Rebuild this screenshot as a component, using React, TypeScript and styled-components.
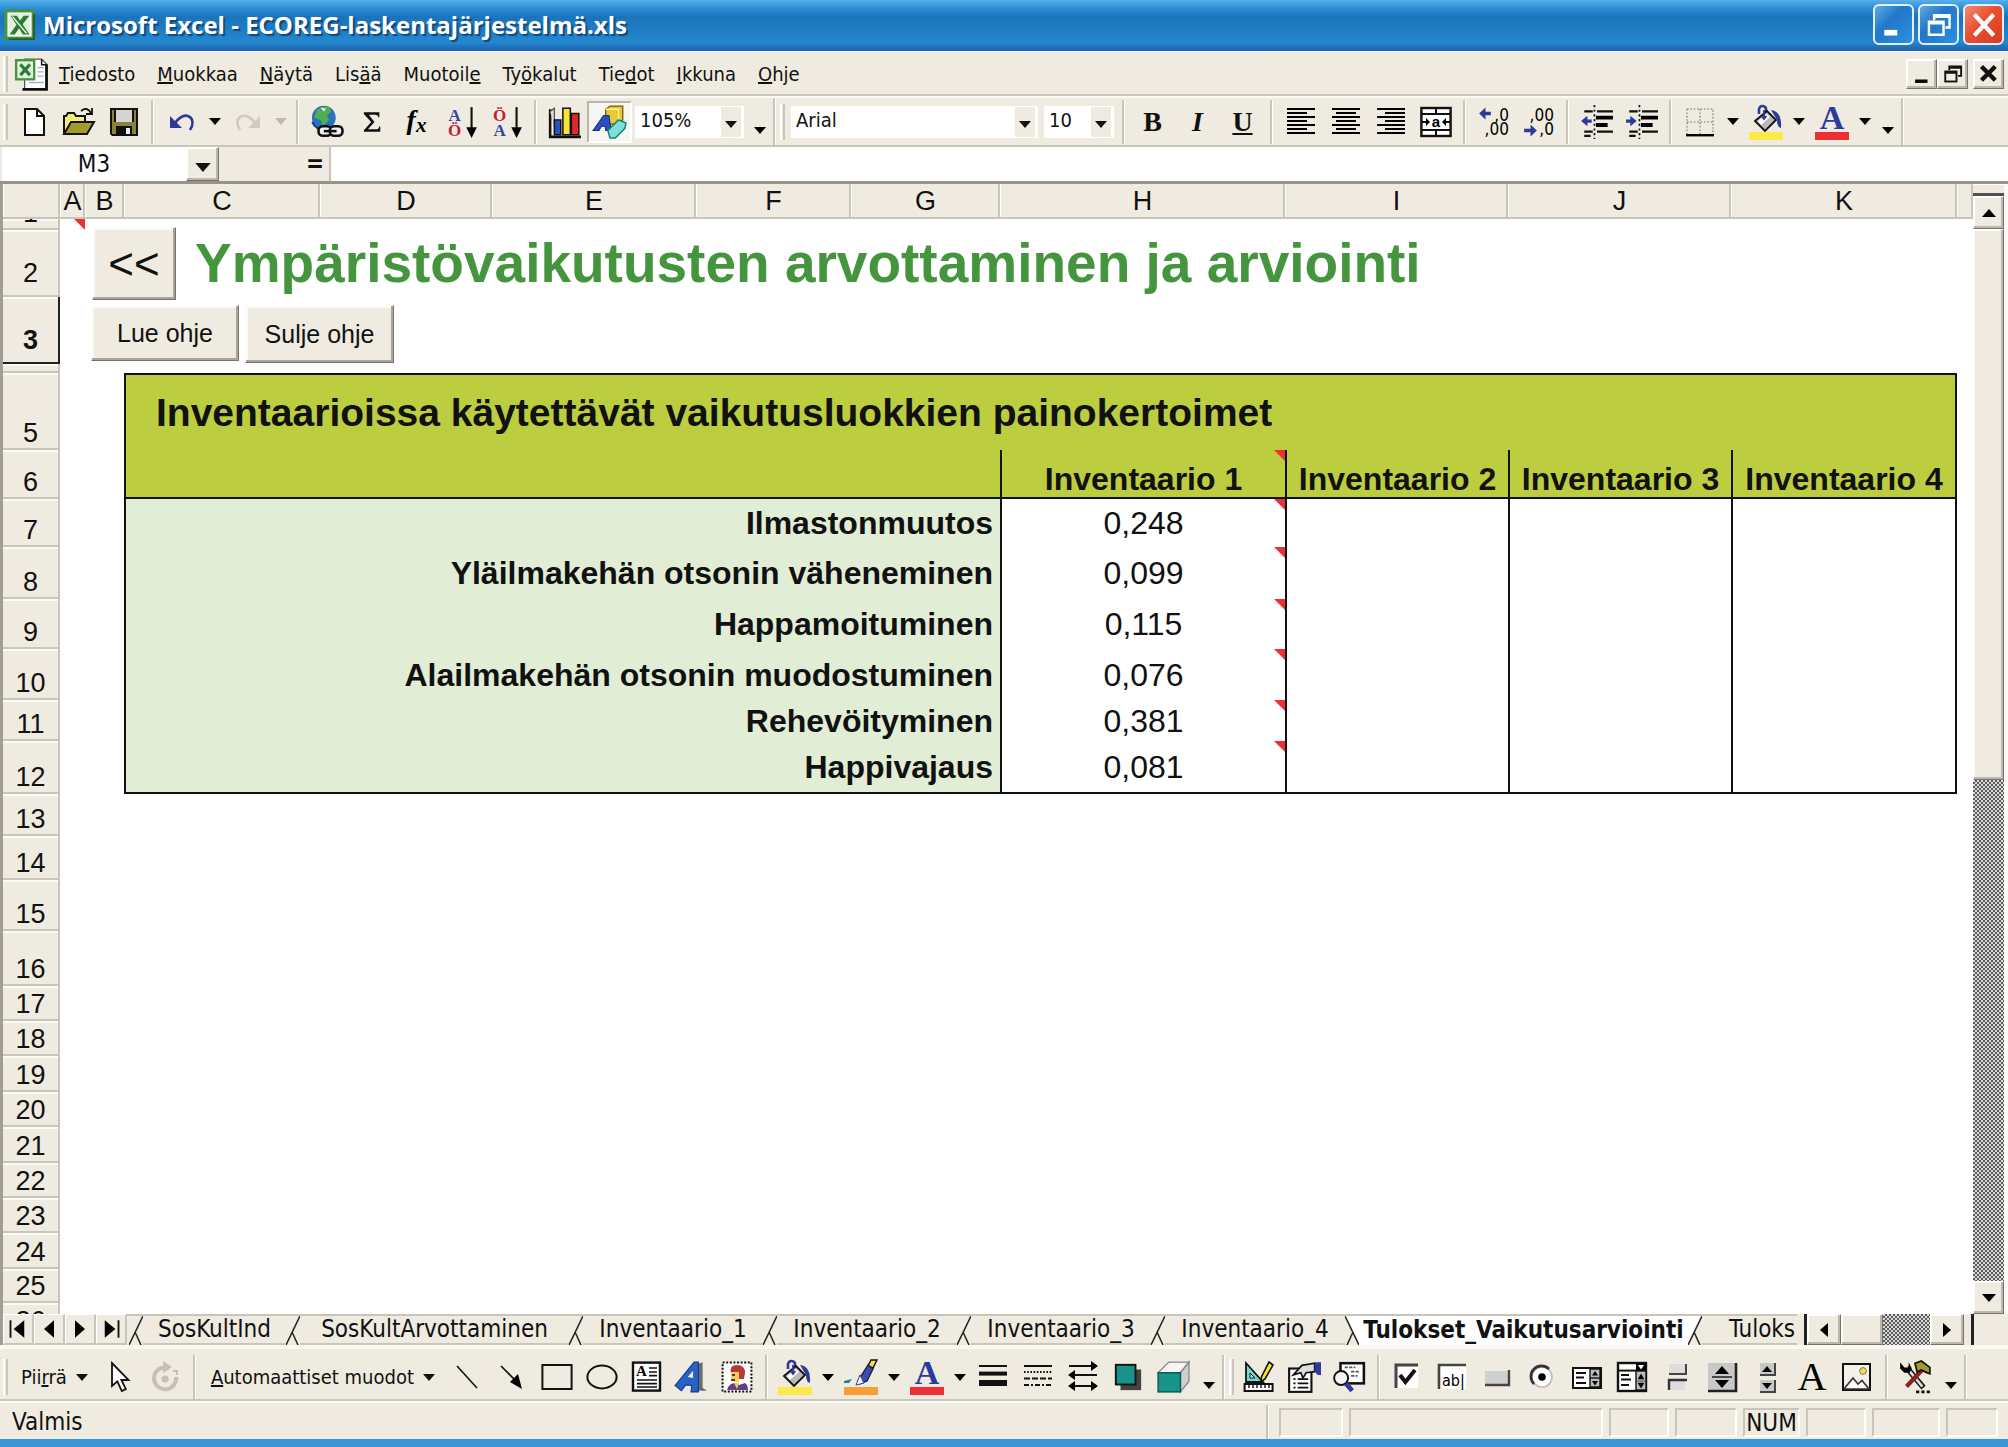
import React from "react";
import styled, { createGlobalStyle, css } from "styled-components";

const face = "#efebe0";
const shade = "#c9c5ba";
const lime = "#bccd3f";
const mint = "#e1edd5";
const ink = "#111111";
const ui = '"DejaVu Sans Condensed", "DejaVu Sans", sans-serif';
const arial = '"Liberation Sans", Arial, sans-serif';
const serif = '"Liberation Serif", "Times New Roman", serif';

const Global = createGlobalStyle`
  * { box-sizing: border-box; }
  body { margin: 0; background: ${face}; color: ${ink}; font-family: ${ui}; }
  button, input, select { font: inherit; color: inherit; margin: 0; }
  button { border: 0; padding: 0; background: transparent; cursor: default; }
`;

const Window = styled.div`
  display: flex;
  flex-direction: column;
  height: 100vh;
  overflow: hidden;
  background: ${face};
`;

/* ---------- title bar ---------- */

const TitleBar = styled.header`
  display: flex;
  align-items: center;
  gap: 8px;
  flex: none;
  height: 51px;
  padding: 0 4px 2px 5px;
  background: linear-gradient(#56b0ea 0, #2f90d6 8px, #1b74ba 17px, #1f7dc4 30px, #2589d0 42px, #1c63b0 50px);
`;

const WindowTitle = styled.h1`
  flex: 1;
  margin: 0;
  font: bold 24px/32px "Open Sans", sans-serif;
  color: #fff;
  text-shadow: 2px 2px 1px #12467f;
  white-space: nowrap;
`;

const CaptionButtons = styled.div`
  display: flex;
  gap: 4px;
`;

const CaptionButton = styled.button<{ $close?: boolean }>`
  width: 41px;
  height: 41px;
  border: 2px solid #e3effa;
  border-radius: 6px;
  background: ${(p) =>
    p.$close
      ? "linear-gradient(135deg, #f08c70, #e8502f 45%, #d83c1c)"
      : "linear-gradient(135deg, #5fa9e4, #2277c8 40%, #2d8fe0)"};
  svg { display: block; margin: auto; }
`;

/* ---------- menus and toolbars ---------- */

const MenuBar = styled.nav`
  display: flex;
  align-items: center;
  flex: none;
  height: 45px;
  padding: 2px 4px 0 3px;
  border-top: 1px solid #fff;
  border-bottom: 2px solid ${shade};
`;

const MenuIcon = styled.span`
  display: flex;
  margin-left: 3px;
`;

const MenuItem = styled.button`
  padding: 0 11px;
  font-size: 20px;
  line-height: 32px;
  white-space: nowrap;
`;

const Spring = styled.span`
  flex: 1;
`;

const raised = css`
  border: 1px solid #fff;
  border-color: #fff #77736b #77736b #fff;
  box-shadow: inset -2px -2px 0 #bbb7ac, inset 1px 1px 0 #fff;
  background: ${face};
`;

const ChildButton = styled.button<{ $apart?: boolean }>`
  ${raised}
  display: flex;
  align-items: center;
  justify-content: center;
  width: 31px;
  height: 30px;
  margin-left: ${(p) => (p.$apart ? 5 : 0)}px;
`;

const Toolbar = styled.div`
  display: flex;
  align-items: center;
  flex: none;
  height: 51px;
  padding-left: 3px;
  border-top: 2px solid #fbfaf5;
  border-bottom: 2px solid ${shade};
`;

const DrawBar = styled(Toolbar)`
  height: 56px;
  padding-top: 6px;
  border-top: 4px solid #faf8f2;
`;

const Grip = styled.span`
  flex: none;
  width: 5px;
  height: 36px;
  margin-right: 3px;
  border-left: 2px solid #fff;
  border-right: 2px solid ${shade};
`;

const Rule = styled.span`
  flex: none;
  width: 3px;
  height: 44px;
  margin: 0 5px;
  border-left: 2px solid ${shade};
  border-right: 1px solid #fff;
`;

const BarEnd = styled.span`
  flex: none;
  align-self: stretch;
  width: 3px;
  margin-right: 4px;
  border-left: 2px solid ${shade};
  border-right: 1px solid #fff;
`;

const Tool = styled.button<{ $down?: boolean }>`
  display: flex;
  align-items: center;
  justify-content: center;
  flex: none;
  width: 45px;
  height: 42px;
  ${(p) =>
    p.$down &&
    css`
      border: 2px solid #fff;
      border-color: #bab6ab #fff #fff #bab6ab;
      background: #f8f6f2;
    `}
`;

const Letter = styled(Tool)<{ $italic?: boolean; $under?: boolean }>`
  font: ${(p) => (p.$italic ? "italic" : "normal")} bold 28px/32px ${serif};
  text-decoration: ${(p) => (p.$under ? "underline" : "none")};
`;

const Drop = styled.button<{ $dim?: boolean }>`
  display: flex;
  align-items: center;
  justify-content: center;
  flex: none;
  width: 21px;
  height: 42px;
  color: ${(p) => (p.$dim ? "#bdb9ae" : "#000")};
`;

const More = styled(Drop)`
  width: 26px;
  align-items: flex-end;
  padding-bottom: 9px;
`;

const TextTool = styled.button`
  display: flex;
  align-items: center;
  gap: 9px;
  padding: 0 10px;
  height: 42px;
  font-size: 20px;
  white-space: nowrap;
`;

const PickerBox = styled.span<{ $width: number }>`
  position: relative;
  flex: none;
  width: ${(p) => p.$width}px;
  height: 32px;
  margin: 0 3px;
  border: 1px solid #fff;
  background: linear-gradient(to left, #fff 2px, ${face} 2px, ${face} 22px, #fff 22px);
  select {
    appearance: none;
    width: 100%;
    height: 30px;
    padding: 0 0 4px 4px;
    border: 0;
    background: transparent;
    font-size: 20px;
  }
  svg { position: absolute; right: 6px; top: 14px; pointer-events: none; }
`;

/* ---------- formula bar ---------- */

const FormulaBar = styled.div`
  display: flex;
  flex: none;
  height: 37px;
  padding-left: 2px;
  border-bottom: 3px solid #97938a;
  font-size: 24px;
`;

const NameBox = styled.input`
  width: 184px;
  border: 0;
  padding: 0;
  background: #fff;
  text-align: center;
  border-radius: 0;
`;

const NameDrop = styled.button`
  ${raised}
  width: 33px;
`;

const EqualsButton = styled.button`
  width: 112px;
  padding-right: 5px;
  border-right: 2px solid ${shade};
  text-align: right;
  font-weight: bold;
`;

const FormulaInput = styled.input`
  flex: 1;
  min-width: 0;
  border: 0;
  padding: 0 6px;
  background: #fff;
  border-radius: 0;
`;

/* ---------- sheet ---------- */

const Body = styled.div`
  display: flex;
  flex: 1 1 0;
  min-height: 0;
  border-left: 3px solid #a19d94;
  background: #fff;
`;

const Canvas = styled.main`
  position: relative;
  flex: 1;
  min-width: 0;
  overflow: hidden;
`;

const Grid = styled.table`
  width: 100%;
  table-layout: fixed;
  border-collapse: separate;
  border-spacing: 0;
  font-family: ${arial};
  th, td { padding: 0; }
`;

const ColHead = styled.th`
  height: 35px;
  padding: 1px 0 0 2px !important;
  border-right: 2px solid ${shade};
  border-bottom: 2px solid ${shade};
  background: ${face};
  box-shadow: inset 1px 0 0 #fff;
  font-size: 27px;
  line-height: 28px;
  font-weight: normal;
  vertical-align: middle;
`;

const RowHead = styled.th<{ $h: number; $high?: boolean; $active?: boolean }>`
  height: ${(p) => p.$h}px;
  border-right: 2px solid ${shade};
  border-bottom: 2px solid ${shade};
  background: ${face};
  box-shadow: inset 0 2px 0 #fbfaf5;
  font-size: 27px;
  line-height: 28px;
  font-weight: normal;
  vertical-align: bottom;
  ${(p) => p.$active && css`border-color: #222; font-weight: bold;`}
  span {
    display: flex;
    align-items: flex-end;
    justify-content: center;
    height: ${(p) => Math.min(p.$h - 2, 40)}px;
    padding-bottom: ${(p) => (p.$high ? 8 : 1)}px;
    overflow: hidden;
  }
`;

const Cell = styled.td`
  position: relative;
`;

const Heading = styled.td`
  padding: 0 0 6px 71px !important;
  vertical-align: bottom;
  font-size: 55px;
  line-height: 55px;
  font-weight: bold;
  color: #45953f;
  white-space: nowrap;
`;

const Banner = styled.td`
  padding-left: 30px !important;
  border: 2px solid ${ink};
  border-bottom: 0;
  background: ${lime};
  font-size: 39px;
  line-height: 44px;
  font-weight: bold;
  white-space: nowrap;
`;

const Inventory = styled.td<{ $last?: boolean }>`
  position: relative;
  padding-bottom: 2px !important;
  border-left: 2px solid ${ink};
  border-bottom: 2px solid ${ink};
  border-right: ${(p) => (p.$last ? `2px solid ${ink}` : 0)};
  background: ${lime};
  font-size: 32px;
  line-height: 32px;
  font-weight: bold;
  text-align: center;
  vertical-align: bottom;
  white-space: nowrap;
`;

const Label = styled.td<{ $end?: boolean }>`
  padding-right: 7px !important;
  border-left: 2px solid ${ink};
  border-bottom: ${(p) => (p.$end ? `2px solid ${ink}` : 0)};
  background: ${mint};
  font-size: 32px;
  line-height: 36px;
  font-weight: bold;
  text-align: right;
  white-space: nowrap;
`;

const Value = styled.td<{ $end?: boolean; $last?: boolean }>`
  position: relative;
  border-left: 2px solid ${ink};
  border-bottom: ${(p) => (p.$end ? `2px solid ${ink}` : 0)};
  border-right: ${(p) => (p.$last ? `2px solid ${ink}` : 0)};
  font-size: 32px;
  line-height: 36px;
  text-align: center;
`;

const Note = styled.i`
  position: absolute;
  top: 0;
  right: 0;
  width: 11px;
  height: 11px;
  background: #ee3035;
  clip-path: polygon(0 0, 100% 0, 100% 100%);
`;

/* Form controls float over the cells, as drawn objects do in a worksheet. */
const FloatButton = styled.button<{ $x: number; $y: number; $w: number; $h: number; $big?: boolean }>`
  ${raised}
  position: absolute;
  left: ${(p) => p.$x}px;
  top: ${(p) => p.$y}px;
  width: ${(p) => p.$w}px;
  height: ${(p) => p.$h}px;
  box-shadow: inset -2px -2px 0 #a9a59b, inset 2px 2px 0 #fbfaf6;
  font-family: ${arial};
  font-size: ${(p) => (p.$big ? 44 : 25)}px;
  line-height: 44px;
`;

const ScrollColumn = styled.aside`
  display: flex;
  flex-direction: column;
  flex: none;
  width: 35px;
  border-right: 4px solid #fbfaf6;
`;

const SplitGrip = styled.span`
  height: 12px;
  background: ${face};
  border-top: 1px solid #fff;
  border-bottom: 3px solid #55524c;
`;

const ScrollButton = styled.button`
  ${raised}
  display: flex;
  align-items: center;
  justify-content: center;
  height: 33px;
  width: 100%;
`;

const Thumb = styled.span`
  ${raised}
  flex: 550 1 0;
`;

const dither = css`
  background: repeating-conic-gradient(#5c5c5c 0 25%, #d9d9d9 0 50%) 0 0 / 4px 4px;
`;

const Trough = styled.span`
  ${dither}
  flex: 502 1 0;
`;

/* ---------- sheet tabs ---------- */

const TabBar = styled.div`
  display: flex;
  flex: none;
  height: 31px;
  border-left: 3px solid #a19d94;
  font-size: 24px;
`;

const NavButton = styled.button`
  display: flex;
  align-items: center;
  justify-content: center;
  flex: none;
  width: 31px;
  border: 1px solid #fff;
  border-right: 2px solid ${shade};
  border-bottom: 2px solid ${shade};
`;

const TabStrip = styled.div`
  display: flex;
  flex: 1;
  min-width: 0;
  overflow: hidden;
  padding-left: 2px;
  border-top: 2px solid ${shade};
`;

const Tab = styled.button<{ $w: number; $on?: boolean }>`
  flex: none;
  width: ${(p) => p.$w}px;
  border-bottom: ${(p) => (p.$on ? 0 : `2px solid ${shade}`)};
  background: ${(p) => (p.$on ? "#fff" : face)};
  font-weight: ${(p) => (p.$on ? "bold" : "normal")};
  line-height: 27px;
  white-space: nowrap;
`;

const Slash = styled.svg`
  flex: none;
  width: 14px;
  height: 29px;
`;

const HScroll = styled.div`
  display: flex;
  flex: none;
  width: 211px;
`;

const HSplit = styled.span`
  width: 10px;
  border-right: 3px solid #222;
  background: ${face};
`;

const HButton = styled(ScrollButton)`
  width: 34px;
  height: 31px;
`;

const HThumb = styled.span`
  ${raised}
  width: 42px;
`;

const HTrough = styled.span`
  ${dither}
  width: 47px;
`;

/* ---------- status bar ---------- */

const StatusBar = styled.footer`
  display: flex;
  align-items: center;
  gap: 6px;
  flex: none;
  height: 46px;
  padding: 2px 10px 0 12px;
  border-top: 2px solid #fbfaf5;
  border-bottom: 8px solid #3a97d6;
  font-size: 24px;
  line-height: 28px;
`;

const Panel = styled.span<{ $w: number }>`
  flex: none;
  width: ${(p) => p.$w}px;
  height: 29px;
  border: 2px solid ${shade};
  border-right-color: #fff;
  border-bottom-color: #fff;
  text-align: center;
  line-height: 26px;
`;

/* ---------- icons ---------- */

const Px = ({ s = 32, children }: { s?: number; children: React.ReactNode }) => (
  <svg width={s} height={s} viewBox="0 0 16 16" overflow="visible" aria-hidden="true">{children}</svg>
);

const Down = ({ w = 12 }: { w?: number }) => (
  <svg width={w} height={w / 2 + 1} viewBox="0 0 12 7" aria-hidden="true"><path d="M0 0h12L6 7z" fill="currentColor" /></svg>
);

const Arrow = ({ turn }: { turn: number }) => (
  <svg width="16" height="16" viewBox="0 0 16 16" aria-hidden="true"><path d="M1 12h14L8 4z" transform={`rotate(${turn} 8 8)`} /></svg>
);

const blue = "#2b3a9b";
const line = { fill: "none", stroke: "#111", strokeWidth: 1 };

const ExcelMark = ({ s }: { s: number }) => (
  <Px s={s}>
    <rect x=".5" y=".5" width="14.5" height="14.5" fill="#fff" stroke="#45953f" strokeWidth="1.6" />
    <rect x="2" y="2" width="11.5" height="11.5" fill="#e3f2de" />
    <path d="M3 3h3.4l1.6 2.6L10 3h3L9.400 7.600 13 13H9.500L7.500 9.700 5.200 13H2.500l3.600-5.200z" fill="#2f7d34" />
    <path d="M4 3.500l7.500 9" stroke="#fff" strokeWidth=".7" />
    <path d="M15.500 2v13.500H2" fill="none" stroke="#2c5b2a" />
  </Px>
);
const BookMark = () => (
  <Px s={34}>
    <path d="M7 1h6l2.500 2.500V15H5V1z" fill="#fff" stroke="#555" strokeWidth=".6" />
    <path d="M15.300 3.500V15.200H4" fill="none" stroke="#111" strokeWidth="1.300" />
    <path d="M13 1v2.700h2.500" fill="none" stroke="#111" strokeWidth=".7" />
    <path d="M11 5h3M11 7h3M11 9h3M7 12h7" stroke="#aac" strokeWidth=".6" />
    <rect x="1" y="1.500" width="8.500" height="9" fill="#e3f2de" stroke="#45953f" strokeWidth="1.100" />
    <path d="M3 3.500l4.500 5M7.500 3.500L3 8.500" stroke="#2f7d34" strokeWidth="1.500" />
  </Px>
);
const NewDoc = () => <Px><path d="M3.500 1.500h6l3.500 3.500v9.500H3.500z" fill="#fff" stroke="#111" /><path d="M9.500 1.500V5H13" {...line} /></Px>;
const OpenFolder = () => (
  <Px>
    <path d="M.5 13.500V5h1l1-1.500h3L6.500 5H11v3" fill="#f7ee72" stroke="#111" />
    <path d="M.5 14l3.500-6h11.500l-3.500 6z" fill="#a39a2c" stroke="#111" />
    <path d="M9 2.500q3-2.500 5 1M14.500 1v3h-3" {...line} strokeWidth=".9" />
  </Px>
);
const Floppy = () => (
  <Px>
    <path d="M1 1h14v14H2l-1-1z" fill="#111" />
    <path d="M2 2h1v6h10V2h1v12H2z" fill="#8a8436" />
    <rect x="4" y="2" width="8" height="6" fill="#d5d4d2" />
    <rect x="4" y="10" width="8" height="4.500" fill="#111" /><rect x="9" y="11" width="2" height="3" fill="#eee" />
  </Px>
);
const Undo = ({ c = blue, flip = false }: { c?: string; flip?: boolean }) => (
  <Px>
    <g transform={flip ? "translate(16 0) scale(-1 1)" : undefined}>
      <path d="M2 5v6h6z" fill={c} />
      <path d="M4.500 8.500Q8 4 11 5q3 1.200 2 5l-1 2" fill="none" stroke={c} strokeWidth="1.300" />
    </g>
  </Px>
);
const Globe = () => (
  <Px s={34}>
    <circle cx="6.500" cy="6" r="5.600" fill="#2c6fc0" />
    <path d="M3 2.500q3-2.500 6-1.500l1 2-2 2 1 2-3 3-1-3-3-1z" fill="#4fae52" /><path d="M5 1.200l2.500.6-1 1.200z" fill="#fff" />
    <path d="M1 8q2 4 6 3.500" fill="none" stroke="#123a7a" strokeWidth=".8" />
    <rect x="4" y="10" width="6" height="4.500" rx="2" fill="#eee" stroke="#111" strokeWidth="1.200" />
    <rect x="9.300" y="10" width="6" height="4.500" rx="2" fill="#eee" stroke="#111" strokeWidth="1.200" />
    <path d="M6.500 12.300h6" stroke="#111" strokeWidth="1.200" />
  </Px>
);
const Sigma = () => <Px s={26}><path d="M3 2h9.500v3H12q-.4-1.500-2-1.500H6L9.500 8 5.500 12.500H10.500q1.600 0 2-1.800h.6V14H3v-1l4.500-5L3 3z" fill="#111" /></Px>;
const Fx = () => (
  <Px s={34}>
    <text x="3" y="11.500" fontFamily={serif} fontStyle="italic" fontWeight="bold" fontSize="13">f</text>
    <text x="7.500" y="12.500" fontFamily={serif} fontStyle="italic" fontWeight="bold" fontSize="10">x</text>
  </Px>
);
const Sort = ({ top, bottom }: { top: string; bottom: string }) => (
  <Px s={34}>
    <text x="4.500" y="7.500" textAnchor="middle" fontFamily={serif} fontWeight="bold" fontSize="8" fill={top === "A" ? "#3346a8" : "#c32030"}>{top}</text>
    <text x="4.500" y="14.800" textAnchor="middle" fontFamily={serif} fontWeight="bold" fontSize="8" fill={bottom === "A" ? "#3346a8" : "#c32030"}>{bottom}</text>
    <path d="M12.500 1v12" stroke="#111" /><path d="M10 10.500h5l-2.500 5z" />
  </Px>
);
const Chart = () => (
  <Px s={34}>
    <path d="M1 2v13h14.500" fill="none" stroke="#111" strokeWidth="1.200" />
    <path d="M1 3l2-1.500v8" fill="#ddd" stroke="#555" strokeWidth=".6" />
    <path d="M3 7h3v7H3z" fill="#2a51c0" stroke="#111" strokeWidth=".7" />
    <path d="M7 1.500h3.500V14H7z" fill="#f8e33c" stroke="#111" strokeWidth=".7" />
    <path d="M11 4h3.500v10H11z" fill="#e3262c" stroke="#111" strokeWidth=".7" />
  </Px>
);
const Shapes = () => (
  <Px s={34}>
    <path d="M6 2l2-1.500h6V7l-2 2H6z" fill="#e9c92f" stroke="#6a5a12" strokeWidth=".6" /><path d="M6 2h6v6" fill="none" stroke="#fff2a0" strokeWidth=".7" />
    <path d="M0 12l5-7h2.500l1 7H6l-.3-2H4l-1.200 2z" fill="#2b4fc0" stroke="#152a80" strokeWidth=".5" />
    <path d="M7 12l5-5 3.500 1.500-.5 2.500-4.500 4.500H8z" fill="#7fe0d8" stroke="#14827a" strokeWidth=".7" />
  </Px>
);
const Lines = ({ mode }: { mode: "l" | "c" | "r" }) => {
  const short = mode === "l" ? [1, 11] : mode === "c" ? [3, 13] : [5, 15];
  return (
    <Px>
      {[1, 3, 5, 7, 9, 11, 13].map((y, i) => (
        <rect key={y} x={i % 2 ? short[0] : 1} width={i % 2 ? short[1] - short[0] : 14} y={y} height="1" />
      ))}
    </Px>
  );
};
const Merge = () => (
  <Px>
    <rect x=".7" y="1" width="14.600" height="14" fill="#fff" stroke="#111" strokeWidth="1.200" />
    <path d="M1 4h14M1 12h14M8 1v3M8 12v3" stroke="#111" />
    <text x="8" y="10.500" textAnchor="middle" fontFamily={arial} fontWeight="bold" fontSize="7.500">a</text>
    <path d="M1 8h3.500M15 8h-3.500" stroke="#111" /><path d="M3 6v4l2-2zM13 6v4l-2-2z" />
  </Px>
);
const Decimals = ({ more = false }: { more?: boolean }) => (
  <Px s={34}>
    <text x="15" y="7.500" textAnchor="end" fontFamily={ui} fontSize="8">{more ? ",0" : ",00"}</text>
    <text x="15" y="14" textAnchor="end" fontFamily={ui} fontSize="8">{more ? ",00" : ",0"}</text>
    {more ? <path d="M1 4l3-2.800v2h2.500v1.600H4v2z" fill={blue} /> : <path d="M7 12l-3-2.800v2H1v1.600h3v2z" fill={blue} />}
  </Px>
);
const Indent = ({ right = false }: { right?: boolean }) => (
  <Px s={34}>
    <path d="M2 3h4M2 12.500h4M2 14.500h3" stroke="#111" />
    <path d="M8 3h7.500M8 12.500h7.500" stroke="#111" /><path d="M7.500 5h8v1.800h-8zM7.500 8.500h5.500v1.800H7.500z" />
    <path d="M6.800 0v16" stroke="#111" strokeDasharray="1 1.200" strokeWidth=".8" />
    <path d={right ? "M5.500 7.500l-3-2.500v1.800H.5v1.500h2V10z" : "M.5 7.500l3-2.500v1.800h2v1.500h-2V10z"} fill={blue} />
  </Px>
);
const Borders = () => (
  <Px>
    <path d="M1.500 1.500h13v12.500M1.500 1.500v12.500M8 1.500v12.500M1.500 8h13" fill="none" stroke="#999" strokeWidth=".8" strokeDasharray=".8 .9" />
    <rect x="1" y="14" width="14" height="1.200" />
  </Px>
);
const Bucket = () => (
  <svg width="34" height="36" viewBox="0 0 17 18" aria-hidden="true">
    <path d="M5 5V2.500Q5.500.8 7 1q1.700.3 1.500 2v3" fill="none" stroke={blue} strokeWidth="1.300" />
    <path d="M3 8.500L9 3.500l4.500 4.500-5.500 5.500z" fill="#b9b9b9" stroke="#111" strokeWidth=".9" />
    <path d="M4.500 8.500L9 5l1.500 1.500L6 10.500z" fill="#fff" />
    <path d="M7.500 3v4M6.300 6l1.200 1.500L8.700 6" fill="none" stroke={blue} strokeWidth=".9" />
    <path d="M11 3q5.500.5 5 9-2-.5-2-4z" fill={blue} />
    <rect y="14" width="17" height="4" fill="#fce94a" />
  </svg>
);
const Brush = () => (
  <svg width="34" height="36" viewBox="0 0 17 18" aria-hidden="true">
    <path d="M13.500.5h3l-2 4-2.500-1z" fill="#f4e03c" stroke="#111" strokeWidth=".7" />
    <path d="M12 3l2.500 2-3 6-3.500 1.500-1-1.500z" fill="#3a4fae" stroke="#16204f" strokeWidth=".7" />
    <path d="M8 8l-2 5 4-1z" fill="#fff" stroke={blue} strokeWidth=".5" />
    <path d="M0 11l4-1-1.500 2H0z" fill="#1b7fb0" />
    <rect y="14" width="17" height="4" fill="#f99d35" />
  </svg>
);
const FontColor = () => (
  <svg width="34" height="36" viewBox="0 0 17 18" overflow="visible" aria-hidden="true">
    <text x="8.500" y="12.500" textAnchor="middle" fontFamily={serif} fontWeight="bold" fontSize="17" fill={blue}>A</text>
    <rect y="14" width="17" height="4" fill="#ee3035" />
  </svg>
);
const Cursor = () => <Px><path d="M4 1v11.500l2.700-2.300 2.200 4.800 2-1-2.200-4.500h3.600z" fill="#fff" stroke="#111" strokeWidth=".9" /></Px>;
const Rotate = () => <Px><path d="M10 3.500A5.500 5.500 0 1 0 13.500 8" fill="none" stroke="#c5c1b6" strokeWidth="2" /><path d="M7 0l4.500 3L7 6z" fill="#c5c1b6" /><circle cx="8" cy="9" r="1.800" fill="#c5c1b6" /><path d="M12 5h2v2" stroke="#c5c1b6" fill="none" /></Px>;
const LineIcon = () => <Px><path d="M3 2.500l10 11" stroke="#111" strokeWidth=".8" /></Px>;
const ArrowIcon = () => <Px><path d="M2.500 2.500L10 10" stroke="#111" strokeWidth=".8" /><path d="M13 14L7 10.500l4-4z" /></Px>;
const RectIcon = () => <Px><rect x=".7" y="2" width="14.600" height="12" {...line} /></Px>;
const OvalIcon = () => <Px><ellipse cx="8" cy="8" rx="7.300" ry="5.700" {...line} /></Px>;
const TextBox = () => (
  <Px>
    <rect x="1" y=".8" width="13.500" height="14" fill="#fff" stroke="#111" strokeWidth="1.200" />
    <text x="2.500" y="7.500" fontFamily={serif} fontWeight="bold" fontSize="7.500">A</text>
    <path d="M9 3.500h4M9 5.500h4M9 7.300h4M3 9.500h10M3 11.300h10M3 13h10" stroke="#111" strokeWidth=".8" />
  </Px>
);
const WordArt = () => <Px s={34}><path d="M10 2l3-1v12l2 1.500h-5z" fill="#6d6d6d" /><path d="M0 12l9-11h2v14H7.500l.4-3-2.900-.2L3 14.500z" fill="#2763c4" stroke="#123a8a" strokeWidth=".5" /><path d="M6 8l2.500-3v3.500z" fill="#efebe0" /></Px>;
const ClipArt = () => (
  <Px>
    <rect x=".8" y=".8" width="14.400" height="14.400" fill="#fff" stroke="#111" strokeDasharray="1 .8" />
    <path d="M5 6q-1-4 3-4t4 4l-.5 3H6z" fill="#b33a3a" /><path d="M5 5.500h4v5H6.500L5 8.500z" fill="#f0cf5a" />
    <path d="M3 14.500q1-3.500 4-3.500l2 1 3-1q1.500 1 1.500 3.500z" fill="#6a3a8a" /><path d="M6.500 11l1.500 3 1-3z" fill="#f0cf5a" /><path d="M5.500 7h1.500M5 9.500h2" stroke="#111" strokeWidth=".7" />
  </Px>
);
const Weights = () => <Px><path d="M1 2.500h14" stroke="#111" /><path d="M1 6.300h14" stroke="#111" strokeWidth="2" /><path d="M1 11h14" stroke="#111" strokeWidth="3" /></Px>;
const Dashes = () => <Px><g stroke="#111"><path d="M1 2.500h14" /><path d="M1 5.500h14" strokeDasharray=".8 .8" /><path d="M1 8.800h14" strokeDasharray="3 1" /><path d="M1 12h14" strokeDasharray="2.500 1 1 1" /></g></Px>;
const Arrows = () => <Px><path d="M1 2.500h12M3 7h12M3 12.500h10" stroke="#111" /><path d="M12 0v5l3.500-2.500zM4 4.500v5L.5 7zM12 10v5l3.500-2.500zM4 10v5L.5 12.500z" /></Px>;
const Shadow = () => <Px s={30}><path d="M4 4h11v11H4z" fill="#444" /><rect x="1.500" y="1.500" width="10.500" height="10.500" fill="#17938a" stroke="#111" /></Px>;
const Cube = () => <Px s={34}><path d="M1 6l5-5h9.500l-4 5z" fill="#f4f4f4" stroke="#888" strokeWidth=".6" /><path d="M11.500 6l4-5v9l-4 5z" fill="#cfcfcf" stroke="#888" strokeWidth=".6" /><rect x="1" y="6" width="10.500" height="9" fill="#17938a" stroke="#0b5c56" strokeWidth=".7" /></Px>;
const Design = () => (
  <Px>
    <path d="M1.500 1v9.500H10z" fill="#6fdccb" stroke="#111" strokeWidth=".9" /><path d="M3.500 6v2.500h2.500z" fill={face} stroke="#111" strokeWidth=".5" />
    <path d="M13 .5l2 1.500-4 7-2 1.500.2-2.500z" fill="#f4e03c" stroke="#111" strokeWidth=".8" />
    <rect x=".8" y="11.500" width="14" height="3.500" fill="#fff" stroke="#111" /><path d="M3 12v1.500M5 12v1.500M7 12v1.500M9 12v1.500M11 12v1.500M13 12v1.500" stroke="#111" strokeWidth=".7" />
  </Px>
);
const Props = () => (
  <Px s={34}>
    <rect x="1" y="4" width="10.500" height="11" fill="#fff" stroke="#111" /><path d="M3 9h1M5 9h5M3 11h1M5 11h5M3 13h1M5 13h5" stroke="#111" strokeWidth=".9" />
    <path d="M3 7l4-4.500L13 1.500v4L9 6 7.500 8.500 6.500 6z" fill="#ddd" stroke="#111" strokeWidth=".8" /><path d="M13 1h3v6h-1.500L13 5.500z" fill={blue} />
  </Px>
);
const ViewCode = () => (
  <Px s={34}>
    <rect x="4" y="1.500" width="11" height="9.500" fill="#fff" stroke="#111" strokeWidth="1.200" /><path d="M6 3.500h5M9 5.500h4M9 7.500h3" stroke="#555" strokeWidth=".8" strokeDasharray="1.500 .6" />
    <circle cx="4.300" cy="8.500" r="3.300" fill="#f5f5f5" stroke="#111" strokeWidth=".9" /><path d="M6.500 11l3 3.500" stroke={blue} strokeWidth="2.200" />
  </Px>
);
const CheckIcon = () => <Px><rect x="2.500" y="2" width="11" height="11.500" fill="#fff" /><path d="M2.500 13.500V2h11" fill="none" stroke="#444" strokeWidth="1.500" /><path d="M4.500 7l2.700 3.500L12 4.500" fill="none" stroke="#111" strokeWidth="2" /></Px>;
const EditIcon = () => <Px><rect x="1.500" y="2" width="13.500" height="12" fill="#fff" /><path d="M1.500 14V2H15" fill="none" stroke="#444" strokeWidth="1.300" /><text x="3" y="12.500" fontFamily={ui} fontSize="8">ab|</text></Px>;
const PushIcon = () => <Px><rect x="2" y="5" width="12.500" height="7" fill="#cfcfcf" /><path d="M14 4.500v7.500H2" fill="none" stroke="#444" strokeWidth="1.200" /></Px>;
const RadioIcon = () => <Px><circle cx="8" cy="8" r="5" fill="#fff" stroke="#bbb" strokeWidth=".8" /><path d="M4 11.500A5 5 0 0 1 11.500 4" fill="none" stroke="#333" strokeWidth="1.300" /><circle cx="8" cy="8" r="1.900" /></Px>;
const ListIcon = () => <Px><rect x="1" y="3.500" width="14" height="10" fill="#fff" stroke="#111" /><path d="M2.500 6h5M2.500 8.300h4M2.500 11h5" stroke="#111" /><rect x="9.500" y="4" width="5" height="9" fill="#bbb" stroke="#111" strokeWidth=".7" /><path d="M9.500 8.500h5" stroke="#111" strokeWidth=".7" /><path d="M10.500 7.300h3L12 5zM10.500 10h3L12 12.300z" /></Px>;
const ComboIcon = () => <Px><rect x="1" y="1" width="14" height="14" fill="#fff" stroke="#111" strokeWidth="1.200" /><path d="M1 4.800h14" stroke="#111" /><rect x="10" y="1" width="5" height="4" /><path d="M11 2h3l-1.500 2.200z" fill="#fff" /><path d="M2.500 7h4M2.500 9.300h5M2.500 12h4" stroke="#111" /><rect x="10" y="5" width="5" height="9.500" fill="#bbb" stroke="#111" strokeWidth=".7" /><path d="M11 9h3l-1.500-2.500zM11 11h3l-1.500 2.500zM10 10h5" stroke="#111" strokeWidth=".3" /></Px>;
const ToggleIcon = () => <Px><rect x="4" y="1.500" width="8" height="5" fill="#ddd" /><path d="M12.500 1.500v5H4" fill="none" stroke="#444" /><rect x="4" y="9.500" width="8" height="5" fill="#ddd" /><path d="M4 14.500v-5h9" fill="none" stroke="#333" strokeWidth="1.200" /></Px>;
const SpinIcon = () => <Px><rect x="1" y="1" width="14" height="14" fill="#c8c8c8" /><path d="M15 1v14H1" fill="none" stroke="#222" strokeWidth="1.300" /><path d="M4.500 6.500h7L8 2.500zM4.500 9.500h7L8 13.500z" /><path d="M3 8h10" stroke="#111" strokeWidth=".7" /></Px>;
const BarIcon = () => <Px><path d="M4.500 1h7.500v6H4.500zM4.500 9.500h7.500v6H4.500z" fill="#c8c8c8" /><path d="M12 1v6H4.500M12 9.500v6H4.500" fill="none" stroke="#444" /><path d="M5.500 5.500h5L8 2.500zM5.500 11h5L8 14z" /></Px>;
const LabelIcon = () => <Px s={34}><text x="8" y="14" textAnchor="middle" fontFamily={serif} fontSize="19">A</text></Px>;
const ImageIcon = () => <Px><rect x="1" y="1.500" width="13.500" height="13" fill="#f3f1ea" stroke="#111" /><circle cx="11" cy="5" r="1.700" fill="#f4e03c" stroke="#777" strokeWidth=".5" /><path d="M1.500 14l4.500-5.500 2.500 3 2-1.800L14 14z" fill="#fff" stroke="#333" strokeWidth=".8" /></Px>;
const ToolsIcon = () => (
  <Px s={34}>
    <path d="M4 3.500l8 9.500" stroke="#111" strokeWidth="2.600" /><path d="M4 3.500l7.500 9" stroke="#ddd" strokeWidth="1.200" />
    <path d="M12 4L4 12.500" stroke="#8d2020" strokeWidth="2" /><path d="M1 1v3l2 2h2.500L6.500 4 5 1v2.500H3z" />
    <path d="M8 1.500l3-1 4 3v3l-2-.8-2-1-2 1z" fill="#a39a2c" stroke="#111" strokeWidth=".8" />
    <path d="M8.500 15h1.500M11 15h1.500M13.500 15H15" stroke="#111" strokeWidth="1.400" />
  </Px>
);
const RestoreIcon = ({ c = "#fff", s = 26 }: { c?: string; s?: number }) => (
  <Px s={s}><path d="M5 5V2h9.500v7.500H12" fill="none" stroke={c} strokeWidth="1.500" /><path d="M5 2.600h9.500M1.500 6.600H11" stroke={c} strokeWidth="2.200" /><rect x="1.800" y="6" width="9" height="8" fill="none" stroke={c} strokeWidth="1.500" /></Px>
);

/* ---------- data ---------- */

const menus: [string, string, string][] = [
  ["", "T", "iedosto"], ["", "M", "uokkaa"], ["", "N", "äytä"], ["Lis", "ä", "ä"], ["Muotoil", "e", ""],
  ["Ty", "ö", "kalut"], ["Tie", "d", "ot"], ["", "I", "kkuna"], ["", "O", "hje"],
];

const columns: [string, number][] = [
  ["A", 25], ["B", 39], ["C", 196], ["D", 172], ["E", 204], ["F", 155], ["G", 149],
  ["H", 285], ["I", 223], ["J", 223], ["K", 226],
];

const weights: [number, number, string, string][] = [
  [7, 48, "Ilmastonmuutos", "0,248"],
  [8, 52, "Yläilmakehän otsonin väheneminen", "0,099"],
  [9, 50, "Happamoituminen", "0,115"],
  [10, 51, "Alailmakehän otsonin muodostuminen", "0,076"],
  [11, 41, "Rehevöityminen", "0,381"],
  [12, 53, "Happivajaus", "0,081"],
];

const emptyRows: [number, number][] = [
  [13, 42], [14, 44], [15, 51], [16, 55], [17, 35], [18, 35], [19, 36], [20, 35],
  [21, 36], [22, 35], [23, 35], [24, 36], [25, 34], [26, 35],
];

const tabs: [string, number][] = [
  ["SosKultInd", 143], ["SosKultArvottaminen", 269], ["Inventaario_1", 180],
  ["Inventaario_2", 180], ["Inventaario_3", 180], ["Inventaario_4", 180],
];

const controls: [string, React.FC][] = [
  ["Valintaruutu", CheckIcon], ["Tekstiruutu", EditIcon], ["Komentopainike", PushIcon], ["Valintanappi", RadioIcon],
  ["Luetteloruutu", ListIcon], ["Yhdistelmäruutu", ComboIcon], ["Vaihtopainike", ToggleIcon], ["Askellus", SpinIcon],
  ["Vierityspalkki", BarIcon], ["Selite", LabelIcon], ["Kuva", ImageIcon],
];

const T = ({ n, down, children }: { n: string; down?: boolean; children: React.ReactNode }) => (
  <Tool aria-label={n} $down={down}>{children}</Tool>
);

const DropArrow = ({ n, dim }: { n: string; dim?: boolean }) => (
  <Drop aria-label={n} $dim={dim}><Down /></Drop>
);

const Picker = ({ label, value, width }: { label: string; value: string; width: number }) => (
  <PickerBox $width={width}>
    <select aria-label={label} defaultValue={value}><option>{value}</option></select>
    <Down />
  </PickerBox>
);

const TabEdge = ({ kind }: { kind: "plain" | "enter" | "leave" }) => (
  <Slash viewBox="0 0 14 29" aria-hidden="true">
    {kind === "enter" && <path d="M0 0L14 29V0z" fill="#fff" />}
    {kind === "leave" && <path d="M0 0H14L0 29z" fill="#fff" />}
    <path d={kind === "enter" ? "M0 0L14 29M8 16L2 29" : "M14 0L0 29M6 16L12 29"} fill="none" stroke="#222" strokeWidth="1.500" />
  </Slash>
);

export default function App() {
  return (
    <Window>
      <Global />
      <TitleBar>
        <ExcelMark s={30} />
        <WindowTitle>Microsoft Excel - ECOREG-laskentajärjestelmä.xls</WindowTitle>
        <CaptionButtons>
          <CaptionButton aria-label="Pienennä"><Px s={26}><rect x="2" y="11" width="8" height="3.500" fill="#fff" /></Px></CaptionButton>
          <CaptionButton aria-label="Palauta"><RestoreIcon /></CaptionButton>
          <CaptionButton aria-label="Sulje" $close><Px s={28}><path d="M2.500 2l11 12M13.500 2l-11 12" stroke="#fff" strokeWidth="2.400" /></Px></CaptionButton>
        </CaptionButtons>
      </TitleBar>

      <MenuBar>
        <Grip />
        <MenuIcon><BookMark /></MenuIcon>
        {menus.map(([a, u, b]) => <MenuItem key={a + u + b}>{a}<u>{u}</u>{b}</MenuItem>)}
        <Spring />
        <ChildButton aria-label="Pienennä ikkuna"><Px s={22}><rect x="3" y="12" width="9" height="2.500" /></Px></ChildButton>
        <ChildButton aria-label="Palauta ikkuna"><RestoreIcon c="#111" s={20} /></ChildButton>
        <ChildButton aria-label="Sulje ikkuna" $apart><Px s={20}><path d="M2 2l11 11M13 2L2 13" stroke="#111" strokeWidth="3.500" /></Px></ChildButton>
      </MenuBar>

      <Toolbar role="toolbar">
        <Grip />
        <T n="Uusi"><NewDoc /></T>
        <T n="Avaa"><OpenFolder /></T>
        <T n="Tallenna"><Floppy /></T>
        <Rule />
        <T n="Kumoa"><Undo /></T>
        <DropArrow n="Kumoa-luettelo" />
        <T n="Tee uudelleen"><Undo c="#cfcbc0" flip /></T>
        <DropArrow n="Tee uudelleen -luettelo" dim />
        <Rule />
        <T n="Hyperlinkki"><Globe /></T>
        <T n="Summa"><Sigma /></T>
        <T n="Funktio"><Fx /></T>
        <T n="Lajittele nousevasti"><Sort top="A" bottom="Ö" /></T>
        <T n="Lajittele laskevasti"><Sort top="Ö" bottom="A" /></T>
        <Rule />
        <T n="Kaavio"><Chart /></T>
        <T n="Piirros" down><Shapes /></T>
        <Picker label="Zoomaus" value="105%" width={109} />
        <More aria-label="Lisää painikkeita"><Down /></More>
        <BarEnd />
        <Grip />
        <Picker label="Fontti" value="Arial" width={247} />
        <Picker label="Fonttikoko" value="10" width={70} />
        <Rule />
        <Letter aria-label="Lihavointi">B</Letter>
        <Letter aria-label="Kursivointi" $italic>I</Letter>
        <Letter aria-label="Alleviivaus" $under>U</Letter>
        <Rule />
        <T n="Tasaa vasemmalle"><Lines mode="l" /></T>
        <T n="Keskitä"><Lines mode="c" /></T>
        <T n="Tasaa oikealle"><Lines mode="r" /></T>
        <T n="Yhdistä ja keskitä"><Merge /></T>
        <Rule />
        <T n="Lisää desimaaleja"><Decimals more /></T>
        <T n="Vähennä desimaaleja"><Decimals /></T>
        <Rule />
        <T n="Pienennä sisennystä"><Indent /></T>
        <T n="Suurenna sisennystä"><Indent right /></T>
        <Rule />
        <T n="Reunat"><Borders /></T>
        <DropArrow n="Reunat-luettelo" />
        <T n="Täyttöväri"><Bucket /></T>
        <DropArrow n="Täyttöväri-luettelo" />
        <T n="Fontin väri"><FontColor /></T>
        <DropArrow n="Fontin väri -luettelo" />
        <More aria-label="Lisää muotoilupainikkeita"><Down /></More>
        <BarEnd />
      </Toolbar>

      <FormulaBar>
        <NameBox aria-label="Nimiruutu" defaultValue="M3" />
        <NameDrop aria-label="Nimet"><Down w={16} /></NameDrop>
        <EqualsButton>=</EqualsButton>
        <FormulaInput aria-label="Kaava" />
      </FormulaBar>

      <Body>
        <Canvas>
          <Grid>
            <colgroup>
              <col width={57} />
              {columns.map(([c, w]) => <col key={c} width={w} />)}
              <col />
            </colgroup>
            <thead>
              <tr>
                <ColHead />
                {columns.map(([c]) => <ColHead key={c} scope="col">{c}</ColHead>)}
                <ColHead />
              </tr>
            </thead>
            <tbody>
              <tr><RowHead $h={11}><span>1</span></RowHead><Cell><Note /></Cell><td colSpan={11} /></tr>
              <tr><RowHead $h={67} $high><span>2</span></RowHead><td colSpan={2} /><Heading colSpan={10}>Ympäristövaikutusten arvottaminen ja arviointi</Heading></tr>
              <tr><RowHead $h={67} $high $active><span>3</span></RowHead><td colSpan={12} /></tr>
              <tr><RowHead $h={9} /><td colSpan={12} /></tr>
              <tr>
                <RowHead $h={77}><span>5</span></RowHead>
                <td colSpan={2} />
                <Banner colSpan={9}>Inventaarioissa käytettävät vaikutusluokkien painokertoimet</Banner>
                <td />
              </tr>
              <tr>
                <RowHead $h={49}><span>6</span></RowHead>
                <td colSpan={2} />
                <Inventory colSpan={5} />
                <Inventory>Inventaario 1<Note /></Inventory>
                <Inventory>Inventaario 2</Inventory>
                <Inventory>Inventaario 3</Inventory>
                <Inventory $last>Inventaario 4</Inventory>
                <td />
              </tr>
              {weights.map(([n, h, label, value]) => (
                <tr key={n}>
                  <RowHead $h={h}><span>{n}</span></RowHead>
                  <td colSpan={2} />
                  <Label colSpan={5} $end={n === 12}>{label}</Label>
                  <Value $end={n === 12}>{value}<Note /></Value>
                  <Value $end={n === 12} />
                  <Value $end={n === 12} />
                  <Value $end={n === 12} $last />
                  <td />
                </tr>
              ))}
              {emptyRows.map(([n, h]) => (
                <tr key={n}><RowHead $h={h}><span>{n}</span></RowHead><td colSpan={12} /></tr>
              ))}
            </tbody>
          </Grid>
          <FloatButton $x={89} $y={43} $w={84} $h={73} $big>&lt;&lt;</FloatButton>
          <FloatButton $x={88} $y={121} $w={148} $h={56}>Lue ohje</FloatButton>
          <FloatButton $x={242} $y={121} $w={149} $h={58}>Sulje ohje</FloatButton>
        </Canvas>
        <ScrollColumn>
          <SplitGrip />
          <ScrollButton aria-label="Vieritä ylös"><Arrow turn={0} /></ScrollButton>
          <Thumb />
          <Trough />
          <ScrollButton aria-label="Vieritä alas"><Arrow turn={180} /></ScrollButton>
        </ScrollColumn>
      </Body>

      <TabBar>
        <NavButton aria-label="Ensimmäinen taulukko"><Px s={20}><path d="M2 1v14" stroke="#111" strokeWidth="1.500" /><path d="M13 1v14L4.500 8z" /></Px></NavButton>
        <NavButton aria-label="Edellinen taulukko"><Px s={20}><path d="M12 1v14L4 8z" /></Px></NavButton>
        <NavButton aria-label="Seuraava taulukko"><Px s={20}><path d="M4 1v14l8-7z" /></Px></NavButton>
        <NavButton aria-label="Viimeinen taulukko"><Px s={20}><path d="M14 1v14" stroke="#111" strokeWidth="1.500" /><path d="M3 1v14l8.500-7z" /></Px></NavButton>
        <TabStrip>
          <TabEdge kind="plain" />
          {tabs.map(([name, w], i) => (
            <React.Fragment key={name}>
              <Tab $w={w}>{name}</Tab>
              <TabEdge kind={i === tabs.length - 1 ? "enter" : "plain"} />
            </React.Fragment>
          ))}
          <Tab $w={329} $on>Tulokset_Vaikutusarviointi</Tab>
          <TabEdge kind="leave" />
          <Tab $w={120}>Tuloks</Tab>
        </TabStrip>
        <HScroll>
          <HSplit />
          <HButton aria-label="Vieritä vasemmalle"><Arrow turn={-90} /></HButton>
          <HThumb />
          <HTrough />
          <HButton aria-label="Vieritä oikealle"><Arrow turn={90} /></HButton>
          <HSplit />
        </HScroll>
      </TabBar>

      <DrawBar role="toolbar">
        <Grip />
        <TextTool><span>Pii<u>r</u>rä</span><Down /></TextTool>
        <T n="Valitse objektit"><Cursor /></T>
        <T n="Kierrä"><Rotate /></T>
        <Rule />
        <TextTool><span><u>A</u>utomaattiset muodot</span><Down /></TextTool>
        <T n="Viiva"><LineIcon /></T>
        <T n="Nuoli"><ArrowIcon /></T>
        <T n="Suorakulmio"><RectIcon /></T>
        <T n="Ellipsi"><OvalIcon /></T>
        <T n="Tekstikehys"><TextBox /></T>
        <T n="WordArt"><WordArt /></T>
        <T n="ClipArt"><ClipArt /></T>
        <Rule />
        <T n="Kuvion täyttöväri"><Bucket /></T>
        <DropArrow n="Kuvion täyttöväri -luettelo" />
        <T n="Viivan väri"><Brush /></T>
        <DropArrow n="Viivan väri -luettelo" />
        <T n="Tekstin väri"><FontColor /></T>
        <DropArrow n="Tekstin väri -luettelo" />
        <T n="Viivan paksuus"><Weights /></T>
        <T n="Katkoviiva"><Dashes /></T>
        <T n="Nuolityyli"><Arrows /></T>
        <T n="Varjostus"><Shadow /></T>
        <T n="Kolmiulotteisuus"><Cube /></T>
        <More aria-label="Lisää piirtopainikkeita"><Down /></More>
        <BarEnd />
        <Grip />
        <T n="Rakennenäkymä"><Design /></T>
        <T n="Ominaisuudet"><Props /></T>
        <T n="Näytä koodi"><ViewCode /></T>
        <Rule />
        {controls.map(([name, Icon]) => <T key={name} n={name}><Icon /></T>)}
        <Rule />
        <T n="Lisää ohjausobjekteja"><ToolsIcon /></T>
        <More aria-label="Lisää ohjauspainikkeita"><Down /></More>
        <BarEnd />
      </DrawBar>

      <StatusBar>
        <span>Valmis</span>
        <Spring />
        <BarEnd />
        <Panel $w={64} />
        <Panel $w={254} />
        <Panel $w={60} />
        <Panel $w={62} />
        <Panel $w={57}>NUM</Panel>
        <Panel $w={60} />
        <Panel $w={68} />
        <Panel $w={52} />
      </StatusBar>
    </Window>
  );
}
